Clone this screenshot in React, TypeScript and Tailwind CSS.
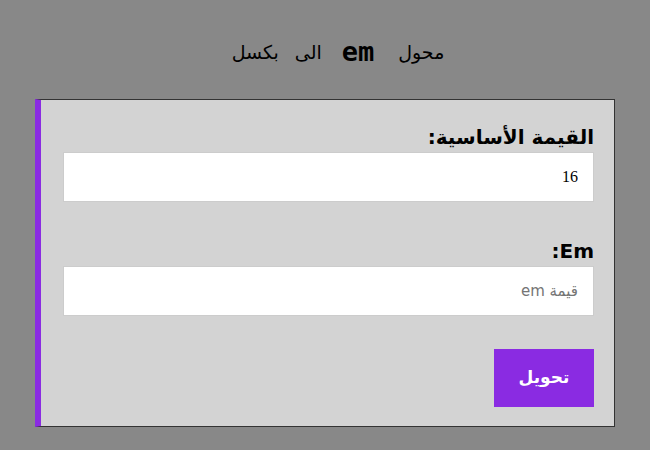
export default function App() {
  return (
    <div dir="rtl" className="min-h-[450px] w-[650px] bg-[#888888] pt-[36px] font-['DejaVu_Sans',sans-serif] text-black">
      <h1 className="mb-[31px] flex h-[32px] items-center justify-center pl-[26px] text-[19px] leading-[32px]">
        <span>محول</span>
        <code className="mr-[24px] ml-[20px] font-['DejaVu_Sans_Mono',monospace] text-[27px] font-bold leading-[32px]">em</code>
        <span>الى</span>
        <span className="mr-[16px]">بكسل</span>
      </h1>

      <div className="mx-[35px] border border-l-[6px] border-[#333333] border-l-[#8a2be2] bg-[#d3d3d3] pt-[22px] pr-[20px] pb-[19px] pl-[22px]">
        <label className="block text-[20px] font-bold leading-[30px]">القيمة الأساسية:</label>
        <input
          type="text"
          defaultValue="16"
          className="block h-[50px] w-full border border-[#cccccc] bg-white px-[15px] font-['Liberation_Serif','DejaVu_Sans',serif] text-[16px] outline-none"
        />

        <label className="mt-[34px] block text-[20px] font-bold leading-[30px]">Em:</label>
        <input
          type="text"
          placeholder="قيمة em"
          className="block h-[50px] w-full border border-[#cccccc] bg-white px-[15px] font-['DejaVu_Sans',sans-serif] text-[15px] outline-none placeholder:text-[#757575]"
        />

        <button className="mt-[33px] h-[58px] w-[100px] bg-[#8a2be2] text-[17px] font-bold text-white">
          تحويل
        </button>
      </div>
    </div>
  );
}
